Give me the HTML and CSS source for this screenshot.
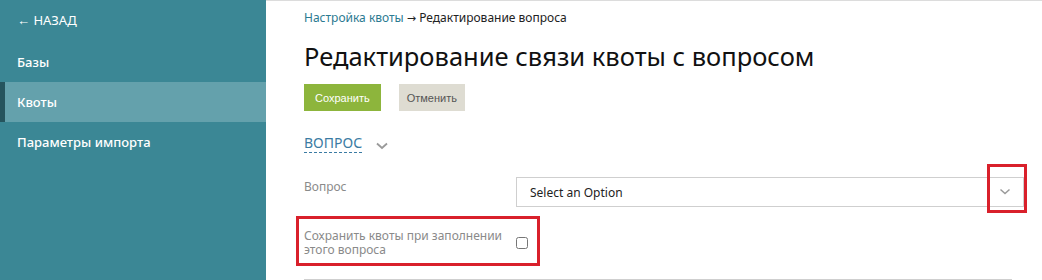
FILE: index.html
```html
<!DOCTYPE html>
<html>
<head>
    <title>Редактирование связи квоты с вопросом</title>
    <link rel="stylesheet" href="styles.css">
</head>
<body>
    <div class="layout">
        <div class="sidebar">
            <a class="back-link" href="#">&larr; НАЗАД</a>
            <a class="nav-item" href="#">Базы</a>
            <a class="nav-item active" href="#">Квоты</a>
            <a class="nav-item" href="#">Параметры импорта</a>
        </div>
        <div class="main">
            <div class="breadcrumbs">
                <a href="#">Настройка квоты</a> <span class="arrow">&rarr;</span> Редактирование вопроса
            </div>
            <h1 class="page-title">Редактирование связи квоты с вопросом</h1>
            <div class="actions">
                <button class="btn btn-save">Сохранить</button>
                <button class="btn btn-cancel">Отменить</button>
            </div>
            <div class="section-head">
                <span class="section-title">ВОПРОС</span>
                <svg class="section-toggle" width="12" height="8" viewBox="0 0 12 8">
                    <path d="M1 1.5 L6 6 L11 1.5" fill="none" stroke="#9a9a9a" stroke-width="1.8"/>
                </svg>
            </div>
            <div class="form-row">
                <label class="form-label">Вопрос</label>
                <div class="select">
                    <span class="select-value">Select an Option</span>
                    <svg class="select-arrow" width="12" height="8" viewBox="0 0 12 8">
                        <path d="M1.5 1.5 L6 5.5 L10.5 1.5" fill="none" stroke="#9a9a9a" stroke-width="1.5"/>
                    </svg>
                    <div class="highlight highlight-arrow"></div>
                </div>
            </div>
            <div class="form-row form-row-check">
                <label class="form-label">Сохранить квоты при заполнении этого вопроса</label>
                <input type="checkbox" class="checkbox">
                <div class="highlight highlight-check"></div>
            </div>
            <div class="divider"></div>
        </div>
    </div>
</body>
</html>
```

FILE: styles.css
```css
body {
    margin: 0;
    font-family: "Noto Sans", "Open Sans", sans-serif;
    background: #fff;
}

a {
    text-decoration: none;
}

.layout {
    display: flex;
    height: 280px;
    overflow: hidden;
}

.sidebar {
    width: 266px;
    flex-shrink: 0;
    background: #3b8795;
    display: flex;
    flex-direction: column;
    padding-top: 10px;
}

.back-link {
    color: #fff;
    font-size: 13px;
    padding: 0 17px;
    line-height: 20px;
    margin-bottom: 12px;
}

.nav-item {
    color: #fff;
    font-size: 13px;
    font-weight: 500;
    line-height: 40px;
    padding-left: 12px;
    border-left: 5px solid transparent;
}

.nav-item.active {
    background: #64a1ac;
    border-left-color: #25545d;
}

.main {
    flex: 1;
    border-top: 1px solid #dcdcdc;
    padding: 0 18px 0 38px;
}

.breadcrumbs {
    font-size: 12px;
    color: #222;
    margin-top: 9px;
    line-height: 16px;
}

.breadcrumbs a {
    color: #2b7a91;
}

.breadcrumbs .arrow {
    font-family: "DejaVu Sans", sans-serif;
    font-size: 11px;
}

.page-title {
    font-size: 25.5px;
    font-weight: 400;
    color: #111;
    margin: 11px 0 0;
    line-height: 36px;
}

.actions {
    display: flex;
    gap: 18px;
    margin-top: 10px;
}

.btn {
    border: none;
    font-family: "Liberation Sans", sans-serif;
    font-size: 11px;
    height: 27px;
    padding: 0 11px;
    cursor: pointer;
}

.btn-save {
    background: #8db53c;
    color: #fff;
}

.btn-cancel {
    background: #dedcd2;
    color: #555;
    padding: 0 8px;
}

.section-head {
    display: flex;
    align-items: center;
    gap: 14px;
    margin-top: 23px;
}

.section-title {
    color: #3b7ba3;
    font-size: 14px;
    line-height: 18px;
    border-bottom: 1px dashed #3b7ba3;
}

.section-toggle {
    margin-top: 4px;
}

.form-row {
    display: flex;
    align-items: flex-start;
    margin-top: 24px;
    position: relative;
}

.form-label {
    width: 212px;
    flex-shrink: 0;
    color: #8a8a8a;
    font-size: 12px;
    line-height: 14px;
    padding-top: 3px;
}

.select {
    flex: 1;
    position: relative;
    height: 28px;
    border: 1px solid #cfcfcf;
    display: flex;
    align-items: center;
    justify-content: space-between;
    padding: 0 12px 0 13px;
}

.select-value {
    font-size: 12px;
    color: #222;
}

.form-row-check {
    margin-top: 22px;
    align-items: center;
}

.form-row-check .form-label {
    width: 200px;
    padding-top: 0;
}

.checkbox {
    margin: 0 0 0 12px;
    width: 12px;
    height: 12px;
}

.highlight {
    position: absolute;
    border: 3px solid #d9202b;
    pointer-events: none;
}

.highlight-arrow {
    right: -4px;
    top: -14px;
    width: 34px;
    height: 43px;
}

.highlight-check {
    left: -8px;
    top: -13px;
    width: 238px;
    height: 44px;
}

.divider {
    border-top: 1px solid #cfcfcf;
    margin-top: 22px;
    margin-right: 12px;
}
```
